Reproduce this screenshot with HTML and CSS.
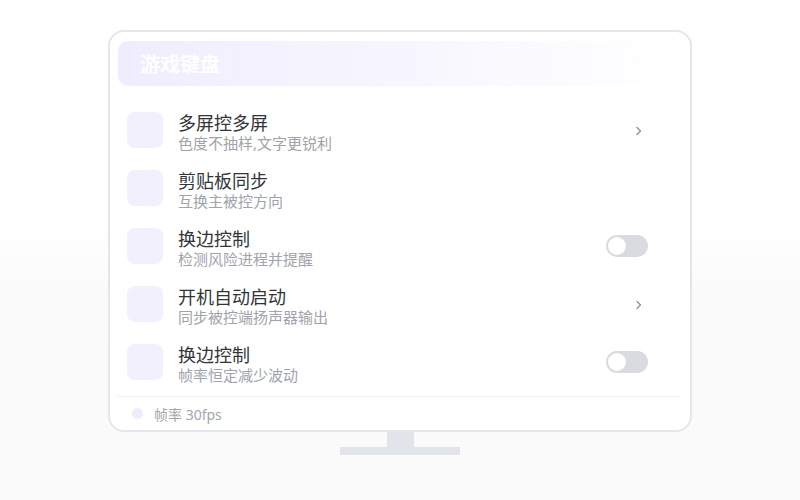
FILE: index.html
```html
<!DOCTYPE html>
<html lang="zh">
<head>
<meta charset="utf-8">
<link rel="stylesheet" href="styles.css">
</head>
<body>
<div class="stage">
  <div class="monitor">
    <div class="header">
      <span class="title">游戏键盘</span>
      <span class="badge">在线</span>
    </div>
    <div class="list">
      <div class="row">
        <div class="icon"></div>
        <div class="text"><div class="t">多屏控多屏</div><div class="s">色度不抽样,文字更锐利</div></div>
        <svg class="chev" width="8" height="10" viewBox="0 0 8 10"><path d="M2 1.5 L5.5 5 L2 8.5" fill="none" stroke="#8a8e96" stroke-width="1.3" stroke-linecap="round" stroke-linejoin="round"/></svg>
      </div>
      <div class="row">
        <div class="icon"></div>
        <div class="text"><div class="t">剪贴板同步</div><div class="s">互换主被控方向</div></div>
      </div>
      <div class="row">
        <div class="icon"></div>
        <div class="text"><div class="t">换边控制</div><div class="s">检测风险进程并提醒</div></div>
        <div class="toggle"><span class="knob"></span></div>
      </div>
      <div class="row">
        <div class="icon"></div>
        <div class="text"><div class="t">开机自动启动</div><div class="s">同步被控端扬声器输出</div></div>
        <svg class="chev" width="8" height="10" viewBox="0 0 8 10"><path d="M2 1.5 L5.5 5 L2 8.5" fill="none" stroke="#8a8e96" stroke-width="1.3" stroke-linecap="round" stroke-linejoin="round"/></svg>
      </div>
      <div class="row">
        <div class="icon"></div>
        <div class="text"><div class="t">换边控制</div><div class="s">帧率恒定减少波动</div></div>
        <div class="toggle"><span class="knob"></span></div>
      </div>
    </div>
    <div class="footer">
      <span class="dot"></span>
      <span class="ftext">帧率 30fps</span>
    </div>
  </div>
  <div class="neck"></div>
  <div class="base"></div>
</div>
</body>
</html>
```
FILE: styles.css
```css
* { box-sizing: border-box; }
html, body { margin: 0; padding: 0; }
body {
  width: 800px;
  height: 500px;
  background: linear-gradient(180deg, #ffffff 0%, #ffffff 45%, #fafafb 60%, #fbfbfc 100%);
  font-family: "Noto Sans", "Noto Sans CJK SC", sans-serif;
  overflow: hidden;
}
.stage {
  padding-top: 30px;
  display: flex;
  flex-direction: column;
  align-items: center;
}
.monitor {
  width: 584px;
  height: 402px;
  border: 2px solid #e3e6eb;
  border-radius: 16px;
  background: #fff;
  padding: 9px 10px 0 8px;
  display: flex;
  flex-direction: column;
}
.header {
  height: 45px;
  border-radius: 10px;
  background: linear-gradient(90deg, #efedfd 0%, #f6f5fe 45%, #ffffff 100%);
  display: flex;
  align-items: center;
  justify-content: space-between;
  padding: 0 20px 0 22px;
}
.title {
  color: #fff;
  font-size: 20px;
  font-weight: 700;
  line-height: 1;
  margin-top: 3px;
}
.badge {
  color: #fff;
  font-size: 12px;
  margin-right: 6px;
}
.list {
  margin-top: 15px;
  padding: 0 32px 0 9px;
  display: flex;
  flex-direction: column;
}
.row {
  height: 58px;
  display: flex;
  align-items: center;
}
.icon {
  width: 36px;
  height: 36px;
  border-radius: 8px;
  background: #f2f0fd;
  flex: none;
}
.text {
  flex: 1;
  margin-left: 15px;
  margin-top: 7px;
}
.t {
  font-size: 18px;
  line-height: 20px;
  color: #333438;
}
.s {
  font-size: 15px;
  line-height: 21px;
  color: #a0a3aa;
}
.chev {
  margin-right: 5px;
  margin-top: 1px;
}
.toggle {
  width: 42px;
  height: 22px;
  border-radius: 11px;
  background: #d9dbe1;
  position: relative;
  flex: none;
}
.knob {
  position: absolute;
  left: 2px;
  top: 2px;
  width: 18px;
  height: 18px;
  border-radius: 50%;
  background: #fff;
}
.footer {
  margin-top: 5px;
  border-top: 1px solid #eef0f3;
  flex: 1;
  display: flex;
  align-items: center;
  padding-left: 14px;
}
.dot {
  width: 11px;
  height: 11px;
  border-radius: 50%;
  background: #efedfd;
}
.ftext {
  margin-left: 11px;
  font-size: 14px;
  color: #a3a6ad;
}
.neck {
  width: 27px;
  height: 15px;
  background: #e1e4e8;
}
.base {
  width: 120px;
  height: 8px;
  background: #e1e4e8;
}
```
